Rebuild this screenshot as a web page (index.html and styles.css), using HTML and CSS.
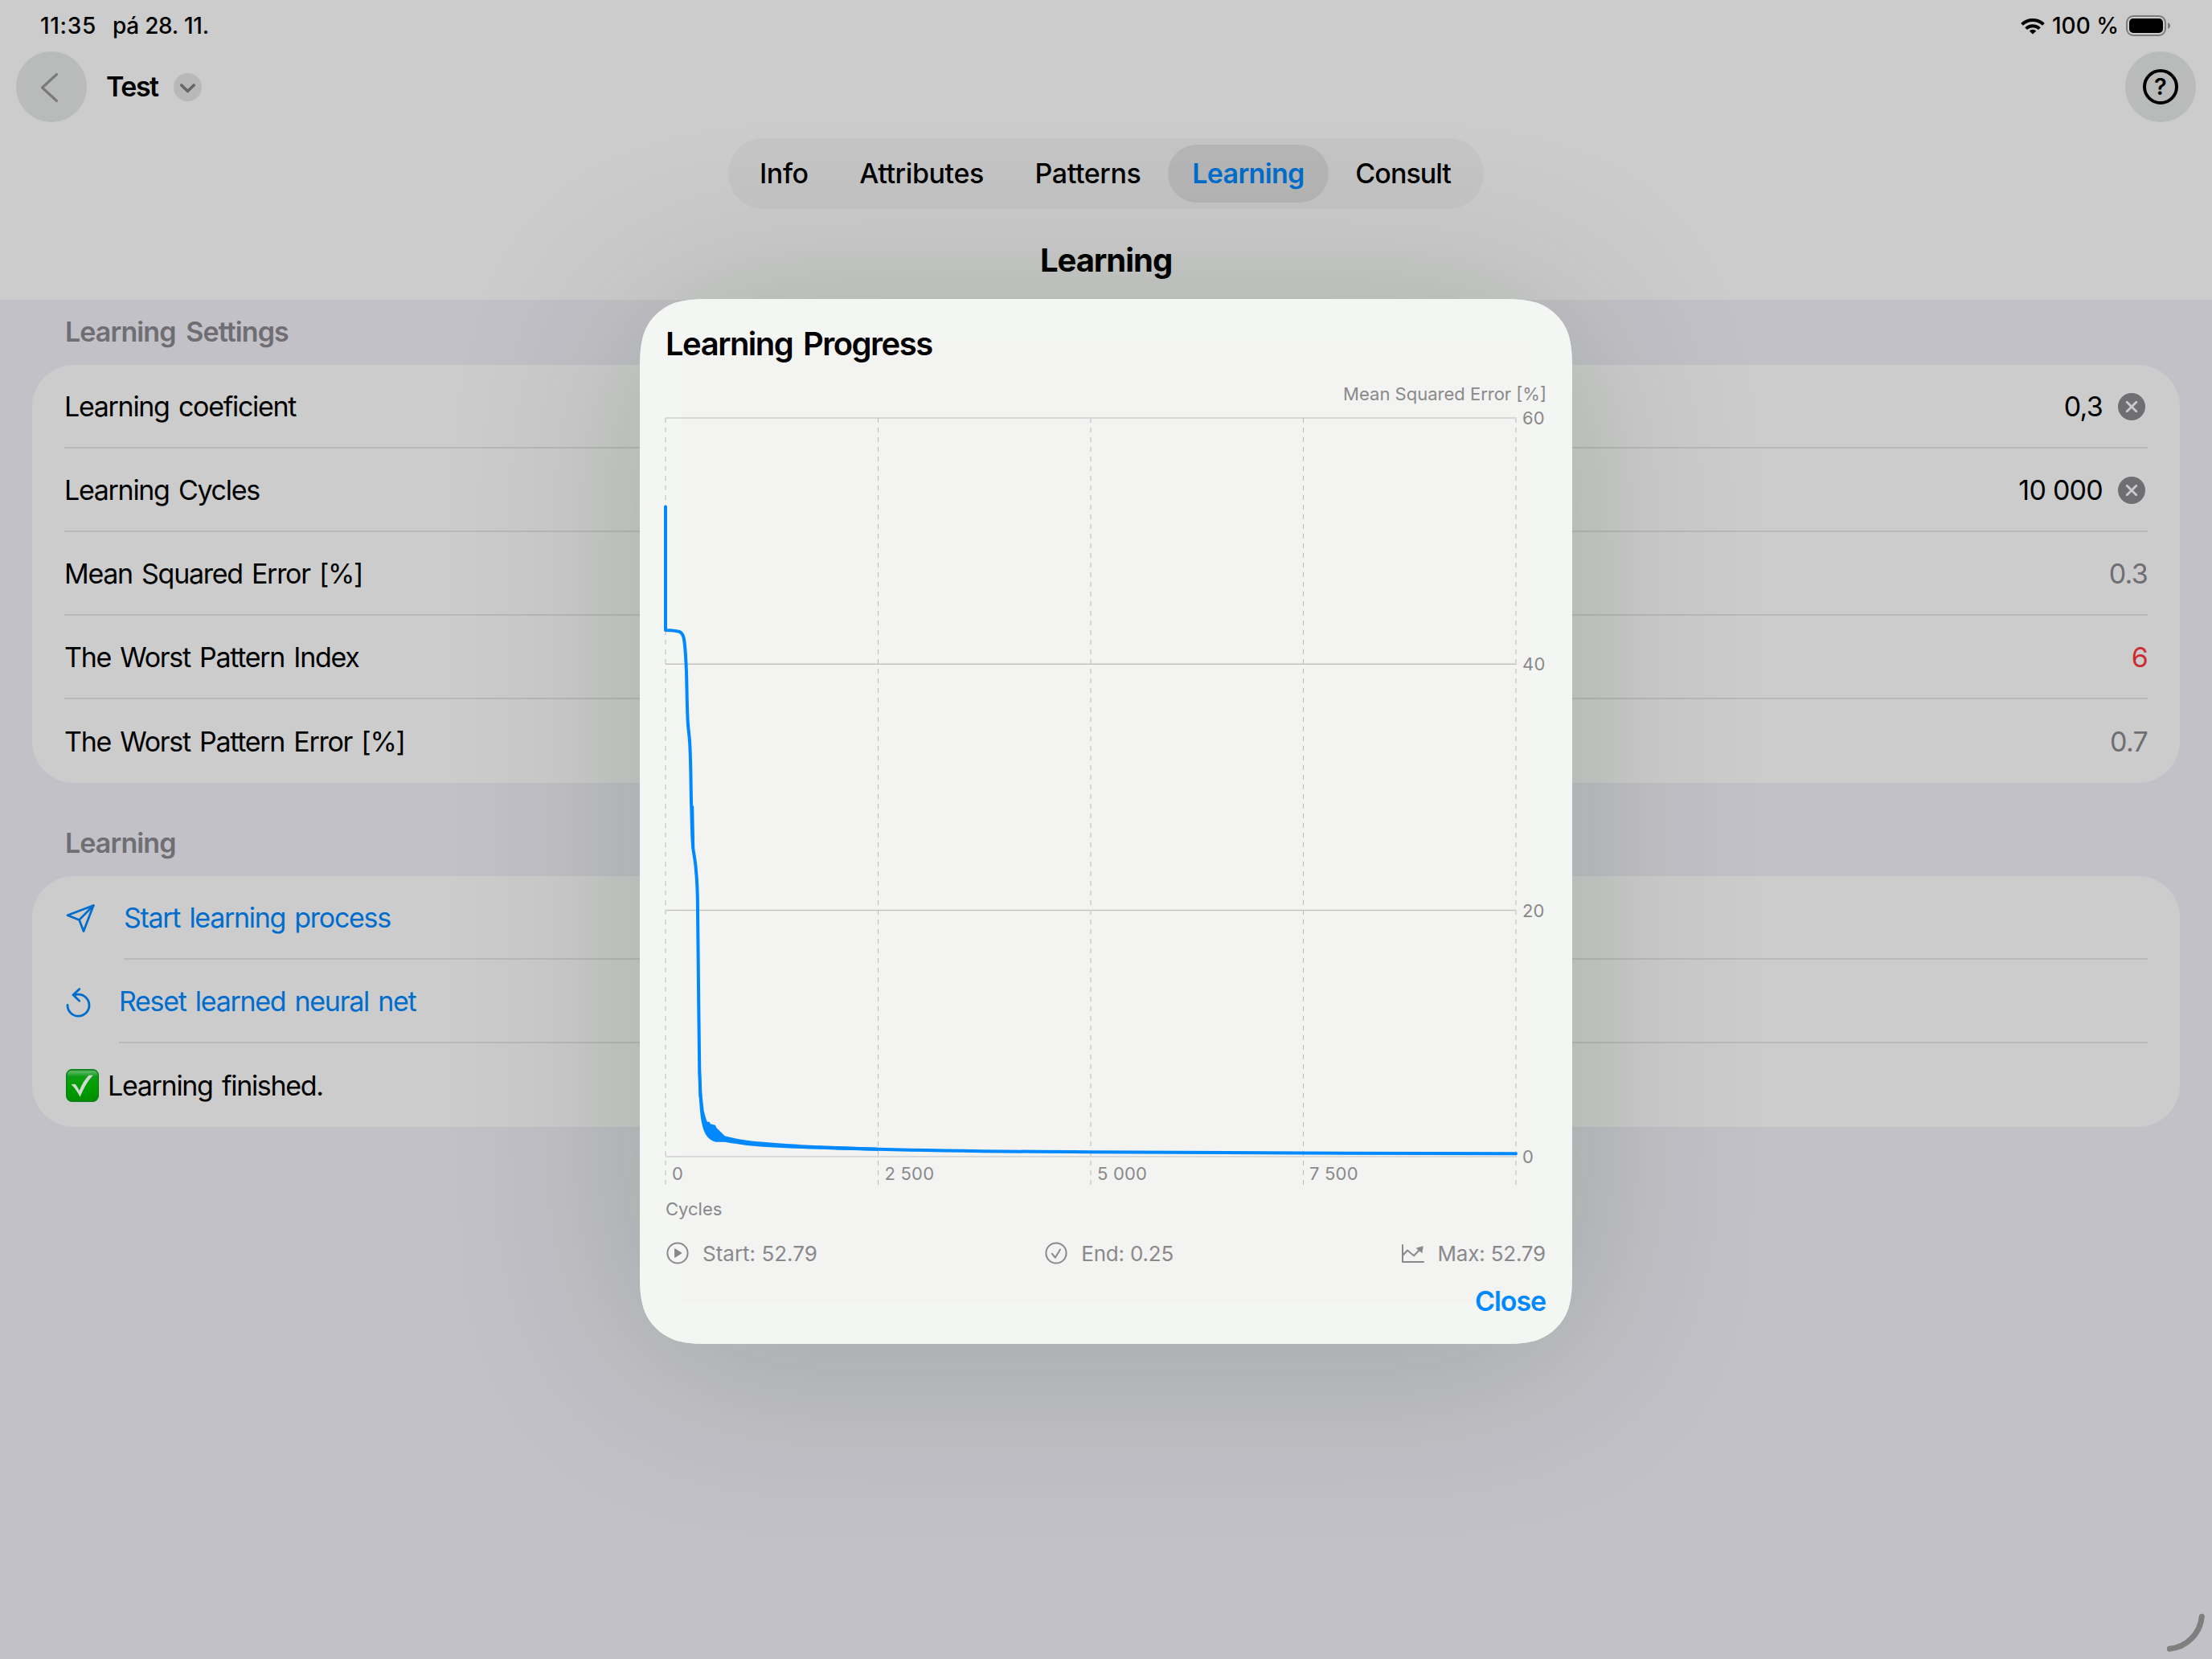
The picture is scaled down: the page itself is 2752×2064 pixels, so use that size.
FILE: index.html
```html
<!DOCTYPE html>
<html lang="en">
<head>
<meta charset="utf-8">
<title>Learning</title>
<link rel="stylesheet" href="styles.css">
</head>
<body>
<div class="screen">
  <header class="header">
    <div class="status">
      <div class="status-left"><span class="clock">11:35</span><span class="date">pá 28. 11.</span></div>
      <div class="status-right">
        <svg class="wifi" viewBox="0 0 30 21" width="30" height="21"><g fill="none" stroke="#000" stroke-width="4"><path d="M1.6 8.4a19.3 19.3 0 0 1 26.8 0"/><path d="M6.6 13.6a12.2 12.2 0 0 1 16.8 0"/></g><path d="M15 20.6l-4.3-4.2a6.3 6.3 0 0 1 8.6 0z"/></svg>
        <span class="percent">100 %</span>
        <svg class="battery" viewBox="0 0 56 26" width="56" height="26"><rect x="1" y="1" width="48" height="24" rx="8" fill="none" stroke="#7b7b7b" stroke-width="2"/><rect x="4" y="4" width="42" height="18" rx="5"/><path d="M52 9c4 1.300 4 6.700 0 8z" fill="#7b7b7b"/></svg>
      </div>
    </div>
    <nav class="nav">
      <div class="nav-left">
        <div class="round"><svg viewBox="0 0 88 88" width="88" height="88"><path d="M50.500 28.500L32.500 45l18 16.500" fill="none" stroke="#7a7a7a" stroke-width="3.200" stroke-linecap="round" stroke-linejoin="round"/></svg></div>
        <span class="doc">Test</span>
        <svg class="drop" viewBox="0 0 35 35" width="35" height="35"><circle cx="17.500" cy="17.500" r="17.500" fill="#b8b8b8"/><path d="M9.800 15l7.700 7.500 7.700-7.500" fill="none" stroke="#666" stroke-width="3.600" stroke-linecap="round" stroke-linejoin="round"/></svg>
      </div>
      <div class="round"><div class="help">?</div></div>
    </nav>
    <div class="tabs">
      <span class="tab first">Info</span><span class="tab">Attributes</span><span class="tab">Patterns</span><span class="tab active">Learning</span><span class="tab last">Consult</span>
    </div>
    <h1 class="title">Learning</h1>
  </header>
  <main>
    <section class="section">
      <h2 class="section-title">Learning Settings</h2>
      <div class="card card-settings">
        <div class="row"><span class="t">Learning coeficient</span><span class="val">0,3</span><svg class="clear" viewBox="0 0 34 34" width="34" height="34"><circle cx="17" cy="17" r="17" fill="#6e6e73"/><path d="M11.200 11.200l11.600 11.600M22.800 11.200L11.200 22.800" stroke="#ccc" stroke-width="2.800" stroke-linecap="round"/></svg></div>
        <div class="row"><span class="t">Learning Cycles</span><span class="val">10 000</span><svg class="clear" viewBox="0 0 34 34" width="34" height="34"><circle cx="17" cy="17" r="17" fill="#6e6e73"/><path d="M11.200 11.200l11.600 11.600M22.800 11.200L11.200 22.800" stroke="#ccc" stroke-width="2.800" stroke-linecap="round"/></svg></div>
        <div class="row"><span class="t">Mean Squared Error [%]</span><span class="val muted">0.3</span></div>
        <div class="row"><span class="t">The Worst Pattern Index</span><span class="val alert">6</span></div>
        <div class="row"><span class="t">The Worst Pattern Error [%]</span><span class="val muted">0.7</span></div>
      </div>
    </section>
    <section class="section section-actions">
      <h2 class="section-title short">Learning</h2>
      <div class="card card-actions">
        <div class="row action"><svg class="ic-send" viewBox="82 1124 38 38" width="38" height="38"><g fill="none" stroke="#006dcc" stroke-width="2.700" stroke-linejoin="round" stroke-linecap="round"><path d="M116.300 1126.500L84 1138.700l14.600 5.700 5.400 14.100z"/><path d="M116.300 1126.500l-17.700 17.900"/></g></svg><div class="line"><span class="t">Start learning process</span></div></div>
        <div class="row action"><svg class="ic-reset" viewBox="82 1226 32 38" width="32" height="38"><g fill="none" stroke="#006dcc" stroke-width="2.800" stroke-linejoin="round" stroke-linecap="round"><path d="M84 1248.500a13.500 13.500 0 1 0 13.500-13.300c-2.200 0-4.400.200-6.300.700"/><path d="M98.800 1228.500l-7.800 7.300 7.800 7.500"/></g></svg><div class="line"><span class="t">Reset learned neural net</span></div></div>
        <div class="row done"><svg class="ic-done" viewBox="0 0 41 41" width="41" height="41"><defs><linearGradient id="g" x1="0" y1="0" x2="0" y2="1"><stop offset="0" stop-color="#1d8f27"/><stop offset=".06" stop-color="#5bb763"/><stop offset=".22" stop-color="#0f9d17"/><stop offset=".5" stop-color="#00a000"/><stop offset="1" stop-color="#008c00"/></linearGradient></defs><rect x=".700" y=".700" width="39.600" height="39.600" rx="7" fill="url(#g)" stroke="#0a8016" stroke-width="1.400"/><path d="M6.500 19l5.200-.2c2.200 2.600 3.600 5 5 8.200 3-7.500 6.600-13.800 11.800-19.200h5.300c-7.300 8-12 16.500-16.100 27-3.400-6.600-6.500-11-11.200-15.800z" fill="#d2d8d2"/></svg><span class="t">Learning finished.</span></div>
      </div>
    </section>
  </main>
  <svg class="grip" viewBox="0 0 52 56" width="52" height="56"><path d="M43.300 7.300A44.500 44.500 0 0 1 3.300 47.300" fill="none" stroke="#7f7f7f" stroke-width="7" stroke-linecap="round"/></svg>

  <div class="modal">
    <div class="sheet">
      <h2 class="sheet-title">Learning Progress</h2>
      <div class="axis-title right"><span>Mean Squared Error [%]</span></div>
      <svg class="chart" viewBox="828 498 1096 992" width="1096" height="992">
        <g stroke="#d8d9d8" stroke-width="2"><path d="M828 520H1887M828 1439H1887"/></g>
        <g stroke="#c1c2c1" stroke-width="1.400"><path d="M828 826.300H1887M828 1132.500H1887"/></g>
        <g stroke="#d6d7d6" stroke-width="2" stroke-dasharray="6"><path d="M828 520V1474M1357 520V1474M1886 520V1474"/></g>
        <g stroke="#b9bab9" stroke-width="1" stroke-dasharray="6"><path d="M1092.500 520V1474M1621.500 520V1474"/></g>
        <g fill="none" stroke="#08f" stroke-width="4" stroke-linejoin="round" stroke-linecap="round">
          <path d="M828 630.500V784L834 784.200C846 785 848.500 786 850.500 793C852 799 853 812 854 836C854.700 860 854.700 882 855.800 899C856.300 908 857.300 912 858 922C859.500 945 859.500 975 860 998C861 1025 861 1048 862.500 1057C863.300 1063 865 1071 865.700 1080C867.500 1098 868 1115 868 1133L868.700 1196L869.300 1255L870.300 1334L871.500 1364"/>
          <path d="M861.200 1004L862.200 1054"/>
          <path d="M1040 1428.200C1057 1428.700 1074 1429.200 1092 1429.700C1180 1432 1270 1432.800 1357 1433.200C1450 1433.900 1540 1434.300 1621 1434.500C1710 1434.800 1800 1435 1886 1435.200"/>
        </g>
        <path d="M868.700 1330H872L873 1358L875.700 1382C877 1388 878.500 1393 880 1395.800H882.600L884 1398.600C887 1399 888.500 1399.500 890 1400L891.500 1403.300L901.700 1413.200C912 1416 926 1418.500 940 1420C970 1422.700 1005 1425 1040 1426L1092 1427.700V1431.700L1040 1430.400C1005 1429.500 970 1428.300 940 1426C925 1424.600 912 1422.500 901.700 1420.700C896 1420.500 893 1421 890.700 1420.700C881 1418.500 876 1411 873.300 1398C871.500 1390 870.500 1377 869.600 1364Z" fill="#08f"/>
        <g class="tick"><text x="836" y="1468">0</text><text x="1100.500" y="1468">2 500</text><text x="1365" y="1468">5 000</text><text x="1629" y="1468">7 500</text>
        <text x="1894" y="528">60</text><text x="1894" y="834">40</text><text x="1894" y="1141">20</text><text x="1894" y="1447">0</text></g>
      </svg>
      <div class="axis-title"><span>Cycles</span></div>
      <div class="stats">
        <div class="stat"><svg viewBox="0 0 30 30" width="30" height="30"><circle cx="15" cy="15" r="12.600" fill="none" stroke="#89898c" stroke-width="2"/><path d="M11.600 9.600v10.800l8.400-5.400z" fill="#89898c" stroke="#89898c" stroke-linejoin="round"/></svg><span>Start: 52.79</span></div>
        <div class="stat end"><svg viewBox="0 0 30 30" width="30" height="30"><circle cx="15" cy="15" r="12.600" fill="none" stroke="#89898c" stroke-width="2"/><path d="M9.800 15.700l4 5 6.200-10.200" fill="none" stroke="#89898c" stroke-width="2" stroke-linecap="round" stroke-linejoin="round"/></svg><span>End: 0.25</span></div>
        <div class="stat end"><svg viewBox="1742 1544 30 30" width="30" height="30"><g fill="none" stroke="#89898c" stroke-width="2" stroke-linecap="round" stroke-linejoin="round"><path d="M1744 1549V1570H1770"/><path d="M1744.500 1561.500L1750 1555.500L1758 1562.300L1766 1554"/></g><path d="M1769.700 1550.300L1760.500 1552.700L1768.400 1559.300z" fill="#89898c"/></svg><span>Max: 52.79</span></div>
      </div>
      <div class="close"><span>Close</span></div>
    </div>
  </div>
</div>
</body>
</html>
```
FILE: styles.css
```css
* { box-sizing: border-box; }
body { margin: 0; font-family: Inter, "Liberation Sans", sans-serif; font-size: 34px; color: #000; }
h1, h2 { margin: 0; }
svg { display: block; flex: none; }
.screen { position: relative; width: 2752px; height: 2064px; overflow: hidden; background: #c2c1c7; }
.header { height: 373px; background: #ccc; }
.status { height: 64px; display: flex; justify-content: space-between; align-items: center; padding: 0 51px 0 50px; font-size: 28px; font-weight: 500; }
.status-left { display: flex; gap: 20px; }
.clock { letter-spacing: .68px; }
.date { letter-spacing: -.27px; }
.status-right { display: flex; align-items: center; gap: 9px; }
.nav { height: 88px; padding: 0 20px; display: flex; justify-content: space-between; }
.nav-left { display: flex; align-items: center; }
.round { width: 88px; height: 88px; border-radius: 50%; background: #b9bbba; display: flex; align-items: center; justify-content: center; }
.help { width: 44px; height: 44px; border: 4px solid #000; border-radius: 50%; font-size: 29px; line-height: 36px; font-weight: 600; text-align: center; }
.doc { font-weight: 600; letter-spacing: -1.5px; margin: 0 19px 2px 24px; }
.tabs { width: 940px; height: 88px; margin: 20px auto 0; border-radius: 44px; background: #c5c5c5; padding: 8px; display: flex; justify-content: space-between; align-items: center; font-weight: 500; letter-spacing: -.4px; }
.tab { height: 72px; line-height: 72px; padding: 0 30px; white-space: nowrap; }
.tab.first { padding-left: 31px; }
.tab.active { background: #b6b6b6; color: #006dcc; border-radius: 36px; font-weight: 600; letter-spacing: -.65px; }
.tab.last { letter-spacing: -.96px; padding-right: 33px; }
.title { font-size: 40px; line-height: 48px; font-weight: 700; letter-spacing: -1.04px; padding-top: 40px; text-align: center; }
.section { padding: 0 40px; }
.section-actions { padding-top: 35px; }
.section-title { height: 81px; line-height: 79px; font-size: 34px; font-weight: 600; letter-spacing: -.9px; word-spacing: 5px; color: #6e6e73; padding-left: 41px; }
.card { background: #ccc; border-radius: 52px; padding: 0 40px; letter-spacing: -1.3px; word-spacing: 3px; }
.row { height: 104px; display: flex; align-items: center; border-bottom: 2px solid #b9b9b9; padding-top: 1px; }
.row:last-child { border-bottom: 0; padding-top: 0; }
.t { white-space: nowrap; }
.val { margin-left: auto; letter-spacing: -.75px; word-spacing: 0; }
.clear { margin: 0 3px 0 19px; }
.muted { color: #6e6e73; }
.alert { color: #cc2d32; }
.row.action { border: 0; color: #006dcc; padding: 0; gap: 34px; }
.line { flex: 1; height: 104px; display: flex; align-items: center; border-bottom: 2px solid #b9b9b9; padding-top: 1px; }
.ic-send, .ic-reset { margin: 1px 0 0 2px; }
.ic-done { margin: 0 11px 0 2px; }
.grip { position: absolute; right: 4px; bottom: 4px; }

.modal { position: absolute; left: 796px; top: 372px; width: 1160px; height: 1300px; border-radius: 72px; box-shadow: 0 12px 240px rgba(8, 36, 0, .19); }
.sheet {
  height: 100%; padding: 0 32px; background: #f3f3f1; box-shadow: inset 0 0 0 52px #f4f6f3; display: flex; flex-direction: column;
  clip-path: path("M104 0H1056C1086 0 1101 0 1117.100 5.100C1134.700 11.500 1148.500 25.300 1154.900 42.900C1160 59 1160 74 1160 104V1196C1160 1226 1160 1241 1154.900 1257.100C1148.500 1274.700 1134.700 1288.500 1117.100 1294.900C1101 1300 1086 1300 1056 1300H104C74 1300 59 1300 42.900 1294.900C25.300 1288.500 11.500 1274.700 5.100 1257.100C0 1241 0 1226 0 1196V104C0 74 0 59 5.100 42.900C11.500 25.300 25.300 11.500 42.900 5.100C59 0 74 0 104 0Z");
}
.sheet-title { font-size: 40px; height: 110px; line-height: 112px; font-weight: 600; letter-spacing: -1.5px; word-spacing: 4px; }
.axis-title { height: 28px; line-height: 28px; font-size: 22px; color: #89898c; }
.axis-title.right { height: 16px; line-height: 16px; text-align: right; }
.chart { overflow: visible; }
.tick { font-size: 22px; fill: #89898c; letter-spacing: .2px; }
.stats { height: 40px; margin-top: 21px; padding-right: 1px; display: flex; justify-content: space-between; align-items: center; font-size: 26px; color: #89898c; }
.stat { display: flex; align-items: center; gap: 16px; }
.stat.end { letter-spacing: -.2px; }
.close { line-height: 79px; padding-right: 1px; text-align: right; font-weight: 600; letter-spacing: -1.1px; color: #08f; }
```
